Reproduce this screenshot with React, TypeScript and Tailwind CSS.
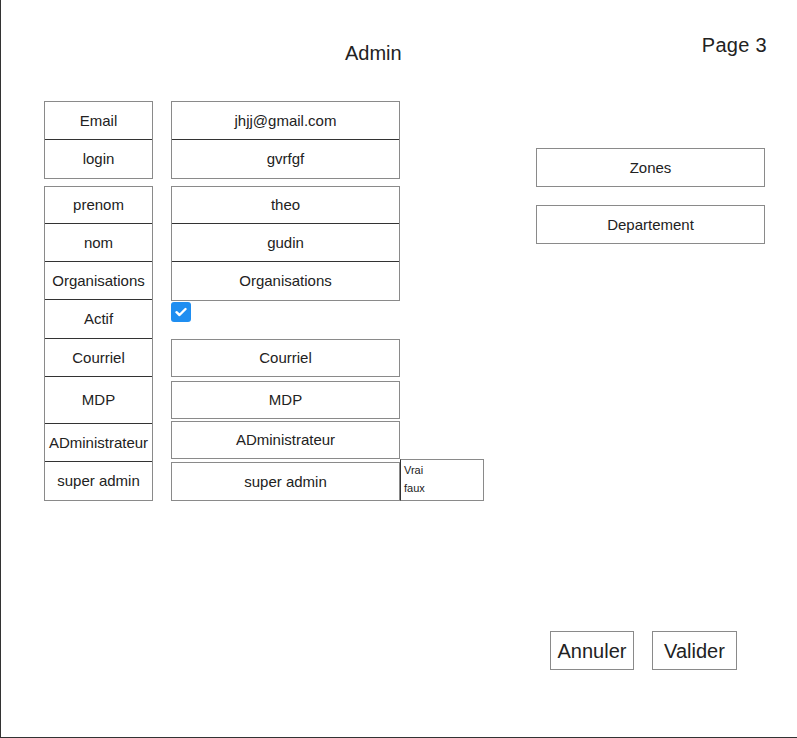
import React from "react";

const font = { fontFamily: '"Liberation Sans", Arial, sans-serif' };

function Cell({ h, children, cls = "" }: { h: string; children: React.ReactNode; cls?: string }) {
  return (
    <div className={`flex items-center justify-center pt-px text-[15px] text-[#222] ${h} ${cls}`}>{children}</div>
  );
}

export default function App() {
  return (
    <div className="w-[797px] h-[738px] bg-white border-l border-b border-[#333] overflow-hidden" style={font}>
      {/* header */}
      <div className="flex h-[101px]">
        <div className="ml-[344px] mt-[41px] text-[20px] leading-[24px] text-[#222]">Admin</div>
        <div className="ml-auto mr-[30px] mt-[33px] text-[20px] leading-[24px] tracking-[0.3px] text-[#222]">Page 3</div>
      </div>

      <div className="flex pl-[43px]">
        {/* left labels */}
        <div className="w-[109px] flex flex-col">
          <div className="h-[78px] border border-[#8a8a8a] flex flex-col divide-y divide-[#333]">
            <Cell h="h-[38px]">Email</Cell>
            <Cell h="flex-1">login</Cell>
          </div>
          <div className="mt-[7px] h-[315px] border border-[#8a8a8a] flex flex-col divide-y divide-[#333]">
            <Cell h="h-[37px]">prenom</Cell>
            <Cell h="h-[38px]">nom</Cell>
            <Cell h="h-[38px]">Organisations</Cell>
            <Cell h="h-[39px]">Actif</Cell>
            <Cell h="h-[38px]">Courriel</Cell>
            <Cell h="h-[47px]">MDP</Cell>
            <Cell h="h-[38px]">ADministrateur</Cell>
            <Cell h="flex-1">super admin</Cell>
          </div>
        </div>

        {/* values */}
        <div className="ml-[18px] w-[229px] flex flex-col">
          <div className="h-[78px] border border-[#8a8a8a] flex flex-col divide-y divide-[#333]">
            <Cell h="h-[38px]">jhjj@gmail.com</Cell>
            <Cell h="flex-1">gvrfgf</Cell>
          </div>
          <div className="mt-[7px] h-[115px] border border-[#8a8a8a] flex flex-col divide-y divide-[#333]">
            <Cell h="h-[37px]">theo</Cell>
            <Cell h="h-[38px]">gudin</Cell>
            <Cell h="flex-1">Organisations</Cell>
          </div>
          <div className="mt-px w-[20px] h-[20px] rounded-[3px] bg-[#1f8ef1] flex items-center justify-center">
            <svg width="12" height="10" viewBox="0 0 12 10" fill="none">
              <path d="M1.5 5.2 L4.5 8 L10.5 2" stroke="white" strokeWidth="2.4" strokeLinecap="round" strokeLinejoin="round" />
            </svg>
          </div>
          <Cell h="h-[38px]" cls="mt-[17px] border border-[#8a8a8a]">Courriel</Cell>
          <Cell h="h-[38px]" cls="mt-[4px] border border-[#8a8a8a]">MDP</Cell>
          <Cell h="h-[38px]" cls="mt-[2px] border border-[#8a8a8a]">ADministrateur</Cell>
          <Cell h="h-[39px]" cls="mt-[3px] border border-[#8a8a8a]">super admin</Cell>
        </div>

        {/* vrai / faux */}
        <div className="w-[84px] pt-[358px]">
          <div className="h-[42px] border border-[#8a8a8a] border-l-[#333] pl-[3px] pt-[1px] text-[11px] leading-[18px] text-[#222]">
            <div>Vrai</div>
            <div>faux</div>
          </div>
        </div>

        {/* right */}
        <div className="ml-[52px] w-[229px] flex flex-col pt-[47px]">
          <Cell h="h-[39px]" cls="border border-[#8a8a8a]">Zones</Cell>
          <Cell h="h-[39px]" cls="mt-[18px] border border-[#8a8a8a]">Departement</Cell>
          <div className="mt-[387px] ml-[14px] flex gap-[18px]">
            <div className="w-[84px] h-[39px] border border-[#8a8a8a] flex items-center justify-center text-[20px] text-[#222]">Annuler</div>
            <div className="w-[85px] h-[39px] border border-[#8a8a8a] flex items-center justify-center text-[20px] text-[#222]">Valider</div>
          </div>
        </div>
      </div>
    </div>
  );
}
